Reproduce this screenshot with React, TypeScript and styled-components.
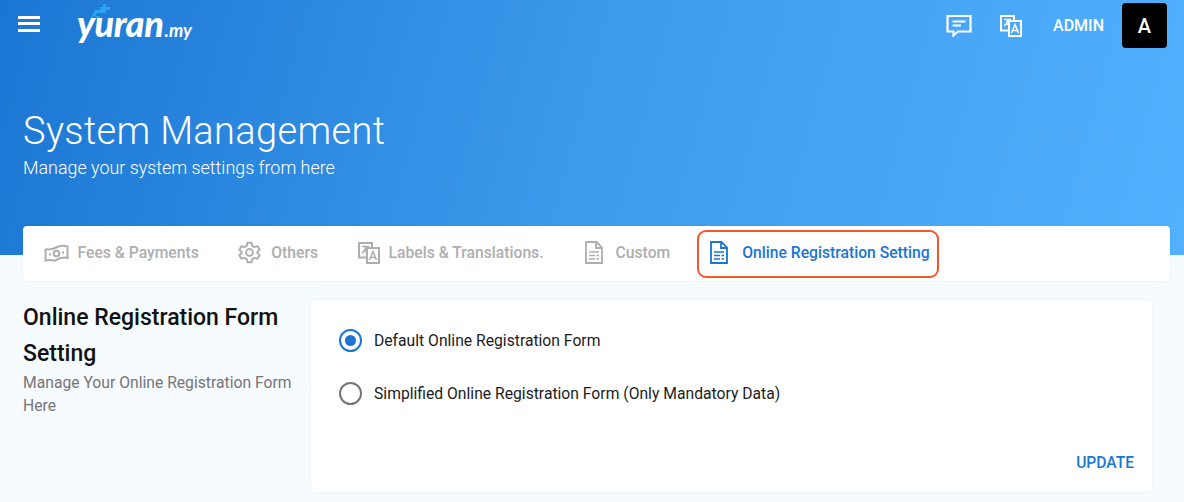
import React from 'react';
import styled, { createGlobalStyle } from 'styled-components';

const GlobalStyle = createGlobalStyle`
  html, body { margin: 0; padding: 0; background: #f6fbff; overflow: hidden; }
  body { font-family: Roboto, "Liberation Sans", sans-serif; }
  * { box-sizing: border-box; }
`;

const Page = styled.div`
  width: 1184px;
  height: 502px;
  overflow: hidden;
`;

const Hero = styled.header`
  height: 255px;
  background: linear-gradient(105deg, #1b76d3 0%, #3d9bec 50%, #52b0ff 100%);
  color: #fff;
  padding: 3px 17px 0 18px;
`;

const TopBar = styled.div`
  display: flex;
  align-items: center;
  height: 45px;
`;

const Burger = styled.button`
  width: 22px;
  height: 16px;
  padding: 0;
  margin-top: -4px;
  border: 0;
  background: none;
  display: flex;
  flex-direction: column;
  justify-content: space-between;

  span {
    display: block;
    height: 3px;
    background: #fff;
  }
`;

const Logo = styled.div`
  position: relative;
  margin-left: 37px;
  margin-top: 1px;
  font-family: Lato, sans-serif;
  font-style: italic;
  font-weight: 900;
  font-size: 36px;
  line-height: 40px;
  letter-spacing: -0.4px;
  white-space: nowrap;

  small {
    margin-left: 1px;
    font-size: 18px;
    font-weight: 700;
    letter-spacing: 0.2px;
  }

  svg {
    position: absolute;
    left: 14px;
    top: 1px;
  }
`;

const TopRight = styled.div`
  margin-left: auto;
  display: flex;
  align-items: center;
`;

const IconSlot = styled.span<{ $gap: number }>`
  display: flex;
  margin-right: ${p => p.$gap}px;
`;

const AdminName = styled.span`
  font-size: 16px;
  font-weight: 500;
  margin-right: 18px;
`;

const Avatar = styled.div`
  width: 45px;
  height: 45px;
  border-radius: 4px;
  background: #000;
  display: flex;
  align-items: center;
  justify-content: center;
  font-size: 20px;
  font-weight: 500;
`;

const HeroText = styled.div`
  padding: 60px 0 0 5px;
`;

const Title = styled.h1`
  margin: 0;
  font-size: 38px;
  font-weight: 300;
  line-height: 46px;
  letter-spacing: 0.35px;
`;

const Subtitle = styled.p`
  margin: 2px 0 0;
  font-size: 17.9px;
  font-weight: 300;
  line-height: 23px;
`;

const TabCard = styled.nav`
  position: relative;
  margin: -29px 14px 0 23px;
  height: 55px;
  background: #fff;
  border-radius: 4px;
  box-shadow: 0 0 2px rgba(30, 80, 130, 0.12);
  display: flex;
  align-items: center;
  padding-left: 7px;
`;

const Tab = styled.div<{ $active?: boolean; $gap: number; $after?: number }>`
  display: flex;
  align-items: center;
  gap: ${p => p.$gap}px;
  height: 48px;
  padding: 0 ${p => (p.$active ? 7.5 : 6.5)}px 2px 11.5px;
  margin-right: ${p => p.$after ?? 18}px;
  font-size: 15.7px;
  font-weight: 500;
  color: ${p => (p.$active ? '#1976d2' : '#aeaeae')};
  border: 2.5px solid ${p => (p.$active ? '#f4572a' : 'transparent')};
  border-radius: 9px;
  white-space: nowrap;
`;

const Body = styled.main`
  display: flex;
  padding: 19px 32px 0 23px;
`;

const Side = styled.aside`
  width: 288px;
  flex: none;
`;

const SideTitle = styled.h2`
  margin: 0;
  font-size: 23px;
  font-weight: 500;
  line-height: 36px;
  color: #111;
`;

const SideText = styled.p`
  margin: -1px 0 0;
  font-size: 15.7px;
  line-height: 23px;
  color: #757575;
`;

const Card = styled.section`
  flex: 1;
  height: 192px;
  background: #fff;
  border-radius: 4px;
  box-shadow: 0 0 2px rgba(30, 80, 130, 0.12);
  padding: 14px 18px 0 28px;
  display: flex;
  flex-direction: column;
`;

const Option = styled.label`
  display: flex;
  align-items: center;
  gap: 12px;
  height: 53px;
  font-size: 15.7px;
  color: #1c1c1c;
`;

const OptionText = styled.span`
  margin-top: -1px;
`;

const Radio = styled.span<{ $checked?: boolean }>`
  width: 23px;
  height: 23px;
  border-radius: 50%;
  border: 2px solid ${p => (p.$checked ? '#1976d2' : '#757575')};
  display: flex;
  align-items: center;
  justify-content: center;

  &::after {
    content: '';
    width: 11px;
    height: 11px;
    border-radius: 50%;
    background: ${p => (p.$checked ? '#1976d2' : 'transparent')};
  }
`;

const Actions = styled.div`
  margin-top: auto;
  height: 44px;
  display: flex;
  justify-content: flex-end;
`;

const UpdateButton = styled.button`
  border: 0;
  background: none;
  padding: 0;
  height: 30px;
  font-family: inherit;
  font-size: 15.6px;
  font-weight: 500;
  color: #1976d2;
`;

const ChatIcon = () => (
  <svg width="26" height="23" viewBox="0 0 26 23" fill="none" stroke="#fff" strokeWidth="2.200">
    <path d="M1.500 2h23v15.500H12l-4.500 4v-4h-6z" />
    <path d="M6.500 7.500h13M6.500 11.500h8.500" />
  </svg>
);

const TranslateIcon = ({ color = '#fff' }: { color?: string }) => (
  <svg width="22" height="22" viewBox="0 0 22 22" fill="none" stroke={color} strokeWidth="2">
    <path d="M9 15.500H1V1h13v5" />
    <path d="M9 6h12v15H9z" />
    <path d="M4 4.500h7M7.500 4.500c0 3-1 5-3.500 6.500M6 7.500c.8 1.200 1.800 2 3 2.500" strokeWidth="1.500" />
    <path d="M11.500 18l3.500-8.500 3.500 8.500M13 15.500h4" strokeWidth="1.500" />
  </svg>
);

const MoneyIcon = () => (
  <svg width="25" height="18" viewBox="0 0 25 18" fill="none" stroke="#aeaeae" strokeWidth="2">
    <path d="M1.500 5v11.500c3-1 6-.5 10 .2M1.500 5c5 1.500 9-.5 13-2.500 3-1 6-1 9 0v11.500c-5-1.500-9 .5-12.500 2.700" />
    <circle cx="12.500" cy="9.500" r="2.800" />
    <path d="M5 10.500h2M18 8.500h2" />
  </svg>
);

const GearIcon = () => (
  <svg width="23" height="23" viewBox="0 0 24 24" fill="none" stroke="#aeaeae" strokeWidth="2" strokeLinejoin="round">
    <circle cx="12" cy="12" r="3.600" />
    <path d="M9.800 1.800h4.400l.6 3.200 2.500 1.400 3.100-1 2.200 3.800-2.400 2.200v1.200l2.400 2.200-2.200 3.800-3.100-1-2.500 1.400-.6 3.200H9.800l-.6-3.200-2.500-1.400-3.100 1-2.200-3.800L3.800 12.600v-1.200L1.400 9.200l2.200-3.800 3.100 1 2.500-1.400z" />
  </svg>
);

const DocIcon = ({ color }: { color: string }) => (
  <svg width="18" height="23" viewBox="0 0 18 23" fill="none" stroke={color} strokeWidth="1.800">
    <path d="M1 1h10.500L17 6.500V22H1z" />
    <path d="M11 1v6h6" />
    <path d="M4 11h10M4 14.500h6M11.500 14.500H14M4 18h6M11.500 18H14" strokeWidth="1.600" />
  </svg>
);

const App: React.FC = () => (
  <Page>
    <GlobalStyle />
    <Hero>
      <TopBar>
        <Burger aria-label="menu">
          <span />
          <span />
          <span />
        </Burger>
        <Logo>
          yuran<small>.my</small>
          <svg width="19" height="15" viewBox="0 0 19 15" fill="#2aa4f4">
            <path d="M0 14l4-8h9v3H6l-2 5zM2 14h7v-2H2zM12 0h3v3h4v3h-4v3h-3V6H9V3h3z" />
          </svg>
        </Logo>
        <TopRight>
          <IconSlot $gap={28}>
            <ChatIcon />
          </IconSlot>
          <IconSlot $gap={31}>
            <TranslateIcon />
          </IconSlot>
          <AdminName>ADMIN</AdminName>
          <Avatar>A</Avatar>
        </TopRight>
      </TopBar>
      <HeroText>
        <Title>System Management</Title>
        <Subtitle>Manage your system settings from here</Subtitle>
      </HeroText>
    </Hero>

    <TabCard>
      <Tab $gap={9} $after={17.5}>
        <MoneyIcon />
        Fees &amp; Payments
      </Tab>
      <Tab $gap={10} $after={17.5}>
        <GearIcon />
        Others
      </Tab>
      <Tab $gap={9} $after={19}>
        <TranslateIcon color="#aeaeae" />
        Labels &amp; Translations.
      </Tab>
      <Tab $gap={13}>
        <DocIcon color="#aeaeae" />
        Custom
      </Tab>
      <Tab $active $gap={14}>
        <DocIcon color="#1976d2" />
        Online Registration Setting
      </Tab>
    </TabCard>

    <Body>
      <Side>
        <SideTitle>Online Registration Form Setting</SideTitle>
        <SideText>Manage Your Online Registration Form Here</SideText>
      </Side>
      <Card>
        <Option>
          <Radio $checked />
          <OptionText>Default Online Registration Form</OptionText>
        </Option>
        <Option>
          <Radio />
          <OptionText>Simplified Online Registration Form (Only Mandatory Data)</OptionText>
        </Option>
        <Actions>
          <UpdateButton>UPDATE</UpdateButton>
        </Actions>
      </Card>
    </Body>
  </Page>
);

export default App;
